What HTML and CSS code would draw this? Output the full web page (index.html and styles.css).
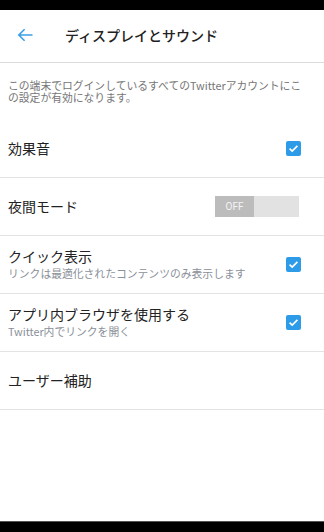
FILE: index.html
```html
<!DOCTYPE html>
<html lang="ja">
<head>
<meta charset="utf-8">
<link rel="stylesheet" href="styles.css">
</head>
<body>
<div class="status"></div>
<header class="bar">
  <svg class="back" width="16" height="14" viewBox="0 0 16 14"><path d="M15.5 7H1.8M7.6 1.2L1.8 7l5.8 5.8" fill="none" stroke="#3a9ee8" stroke-width="1.6"/></svg>
  <h1 class="title">ディスプレイとサウンド</h1>
</header>
<main class="main">
  <p class="desc">この端末でログインしているすべてのTwitterアカウントにこの設定が有効になります。</p>
  <div class="row">
    <div class="label">効果音</div>
    <span class="check"><svg width="15" height="15" viewBox="0 0 15 15"><path d="M3.6 7.6l2.6 2.5 5.2-5.2" fill="none" stroke="#fff" stroke-width="1.7"/></svg></span>
  </div>
  <div class="row">
    <div class="label">夜間モード</div>
    <span class="toggle"><span class="thumb">OFF</span></span>
  </div>
  <div class="row">
    <div class="texts">
      <div class="label">クイック表示</div>
      <div class="sub">リンクは最適化されたコンテンツのみ表示します</div>
    </div>
    <span class="check"><svg width="15" height="15" viewBox="0 0 15 15"><path d="M3.6 7.6l2.6 2.5 5.2-5.2" fill="none" stroke="#fff" stroke-width="1.7"/></svg></span>
  </div>
  <div class="row">
    <div class="texts">
      <div class="label">アプリ内ブラウザを使用する</div>
      <div class="sub">Twitter内でリンクを開く</div>
    </div>
    <span class="check"><svg width="15" height="15" viewBox="0 0 15 15"><path d="M3.6 7.6l2.6 2.5 5.2-5.2" fill="none" stroke="#fff" stroke-width="1.7"/></svg></span>
  </div>
  <div class="row">
    <div class="label">ユーザー補助</div>
  </div>
</main>
<div class="navbar"></div>
</body>
</html>
```
FILE: styles.css
```css
* { box-sizing: border-box; }
html, body { margin: 0; padding: 0; }
body {
  width: 324px;
  height: 532px;
  display: flex;
  flex-direction: column;
  background: #fff;
  font-family: "Noto Sans CJK JP", "Noto Sans", sans-serif;
  color: #222;
  overflow: hidden;
}
.status { height: 10px; background: #000; flex: none; }
.bar {
  height: 53px;
  flex: none;
  display: flex;
  align-items: center;
  border-bottom: 1px solid #dcdcdc;
  padding-left: 17px;
}
.back { display: block; margin-top: -2px; }
.title {
  margin: 0 0 0 32px;
  font-size: 14px;
  font-weight: 500;
  line-height: 18px;
  margin-top: -2px;
  color: #222;
}
.main { flex: 1; }
.desc {
  margin: 0;
  height: 57px;
  padding: 16px 16px 0 8px;
  font-size: 10.8px;
  line-height: 12px;
  color: #767676;
}
.row {
  height: 58px;
  border-bottom: 1px solid #e3e3e3;
  display: flex;
  align-items: center;
  justify-content: space-between;
  padding: 0 23px 0 8px;
}
.label { font-size: 14px; line-height: 17px; color: #222; }
.texts { display: flex; flex-direction: column; }
.sub { font-size: 10.8px; line-height: 16px; color: #8a9099; }
.check {
  width: 15px;
  height: 15px;
  border-radius: 2px;
  background: #2d9be8;
  display: block;
  flex: none;
}
.check svg { display: block; }
.toggle {
  width: 84px;
  height: 21px;
  background: #e2e2e2;
  display: flex;
  margin-right: 2px;
}
.thumb {
  width: 39px;
  background: #bcbcbc;
  color: #f4f4f4;
  font-family: "Roboto", sans-serif;
  font-size: 10px;
  line-height: 21px;
  text-align: center;
}
.navbar {
  height: 11px;
  flex: none;
  background: #000;
  border-top: 1px solid #555;
}
```
